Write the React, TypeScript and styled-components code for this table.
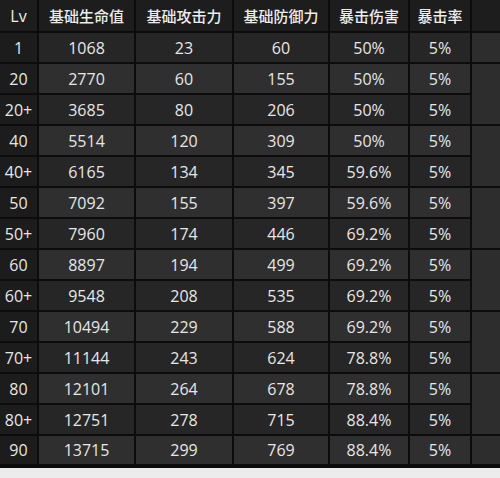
import { FC } from 'react';
import styled, { createGlobalStyle } from 'styled-components';

const GlobalStyle = createGlobalStyle`
  html, body {
    margin: 0;
    padding: 0;
    background: #ececec;
  }
  body {
    font-family: "Open Sans", "Noto Sans CJK SC", sans-serif;
  }
`;

type Row = [string, string, string, string, string, string];

const rows: Row[] = [
  ['1', '1068', '23', '60', '50%', '5%'],
  ['20', '2770', '60', '155', '50%', '5%'],
  ['20+', '3685', '80', '206', '50%', '5%'],
  ['40', '5514', '120', '309', '50%', '5%'],
  ['40+', '6165', '134', '345', '59.6%', '5%'],
  ['50', '7092', '155', '397', '59.6%', '5%'],
  ['50+', '7960', '174', '446', '69.2%', '5%'],
  ['60', '8897', '194', '499', '69.2%', '5%'],
  ['60+', '9548', '208', '535', '69.2%', '5%'],
  ['70', '10494', '229', '588', '69.2%', '5%'],
  ['70+', '11144', '243', '624', '78.8%', '5%'],
  ['80', '12101', '264', '678', '78.8%', '5%'],
  ['80+', '12751', '278', '715', '88.4%', '5%'],
  ['90', '13715', '299', '769', '88.4%', '5%'],
];

const headers = ['Lv', '基础生命值', '基础攻击力', '基础防御力', '暴击伤害', '暴击率'];
const widths = [38, 97, 98, 96, 80, 62, 29];

// the empty column on the right merges pairs of rows
const sideSpan = (i: number) => {
  if (i === 0 || i === rows.length - 1) return 1;
  return i % 2 === 1 ? 2 : 0;
};

const App: FC = () => (
  <>
    <GlobalStyle />
    <StatTable>
      <colgroup>
        {widths.map((w, i) => (
          <col key={i} style={{ width: w }} />
        ))}
      </colgroup>
      <thead>
        <tr>
          {headers.map((h) => (
            <HeadCell key={h}>{h}</HeadCell>
          ))}
          <HeadCell />
        </tr>
      </thead>
      <tbody>
        {rows.map((r, i) => {
          const span = sideSpan(i);
          return (
            <BodyRow key={r[0]}>
              <LvCell>{r[0]}</LvCell>
              {r.slice(1).map((v, j) => (
                <Cell key={j} $dark={i % 2 === 0}>
                  {v}
                </Cell>
              ))}
              {span > 0 && <SideCell rowSpan={span} />}
            </BodyRow>
          );
        })}
      </tbody>
    </StatTable>
  </>
);

const StatTable = styled.table`
  width: 500px;
  table-layout: fixed;
  border-collapse: collapse;
  background: #2b2b2b;
  border-bottom: 4px solid #0c0c0c;
  color: #e6e6e6;
  font-size: 16px;
  font-weight: 500;
  text-align: center;
`;

const HeadCell = styled.th`
  height: 31px;
  padding: 0;
  background: #1d1d1d;
  border: 2px solid #0c0c0c;
  border-top: none;
  font-family: "Open Sans", "Noto Sans CJK SC", sans-serif;
  font-weight: 500;
  font-size: 15px;
  color: #ededed;

  &:first-child {
    border-left: none;
    font-size: 16px;
  }
  &:last-child {
    border-right: none;
  }
`;

const BodyRow = styled.tr`
  height: 31px;
`;

const LvCell = styled.td`
  padding: 0;
  background: #1c1c1c;
  border: 2px solid #0c0c0c;
  border-left: none;
`;

const Cell = styled.td<{ $dark: boolean }>`
  padding: 0;
  background: ${(p) => (p.$dark ? '#262626' : '#2f2f2f')};
  border: 2px solid #0c0c0c;
`;

const SideCell = styled.td`
  padding: 0;
  background: #2d2d2d;
  border: 2px solid #0c0c0c;
  border-right: none;
`;

export default App;
